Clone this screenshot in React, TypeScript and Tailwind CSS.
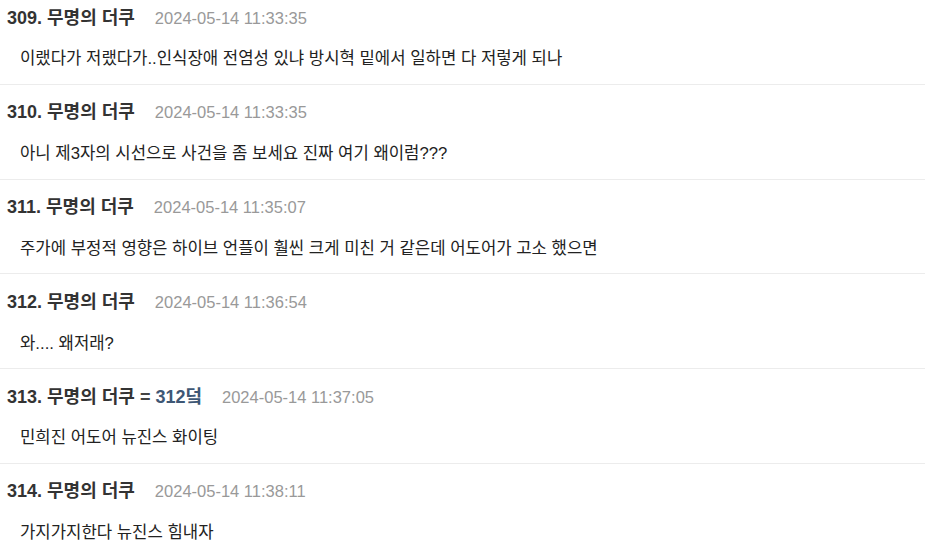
import React from "react";

type Post = { no: number; extra?: string; time: string; body: string };

const posts: Post[] = [
  { no: 309, time: "2024-05-14 11:33:35", body: "이랬다가 저랬다가..인식장애 전염성 있냐 방시혁 밑에서 일하면 다 저렇게 되나" },
  { no: 310, time: "2024-05-14 11:33:35", body: "아니 제3자의 시선으로 사건을 좀 보세요 진짜 여기 왜이럼???" },
  { no: 311, time: "2024-05-14 11:35:07", body: "주가에 부정적 영향은 하이브 언플이 훨씬 크게 미친 거 같은데 어도어가 고소 했으면" },
  { no: 312, time: "2024-05-14 11:36:54", body: "와.... 왜저래?" },
  { no: 313, extra: "312덬", time: "2024-05-14 11:37:05", body: "민희진 어도어 뉴진스 화이팅" },
  { no: 314, time: "2024-05-14 11:38:11", body: "가지가지한다 뉴진스 힘내자" },
];

export default function App() {
  return (
    <div
      className="w-[925px] h-[543px] overflow-hidden bg-white"
      style={{ fontFamily: '"Liberation Sans", "Noto Sans CJK KR", sans-serif' }}
    >
      <div className="mt-[-10px]">
        {posts.map((p) => (
          <div key={p.no} className="pt-[17px] pb-[12.75px] border-b border-[#ececec]">
            <div className="flex items-center h-[22px] pl-[7px]">
              <span className="text-[18px] font-bold text-[#333]">
                {p.no}. 무명의 더쿠
                {p.extra && (
                  <>
                    {" "}
                    <span className="text-[#444]">=</span>{" "}
                    <span className="text-[#3e5775]">{p.extra}</span>
                  </>
                )}
              </span>
              <span className="ml-[20px] text-[16.5px] text-[#999]">{p.time}</span>
            </div>
            <div className="mt-[18px] h-[24px] flex items-center pl-[20px] text-[16.7px] text-[#222]">
              {p.body}
            </div>
          </div>
        ))}
      </div>
    </div>
  );
}
